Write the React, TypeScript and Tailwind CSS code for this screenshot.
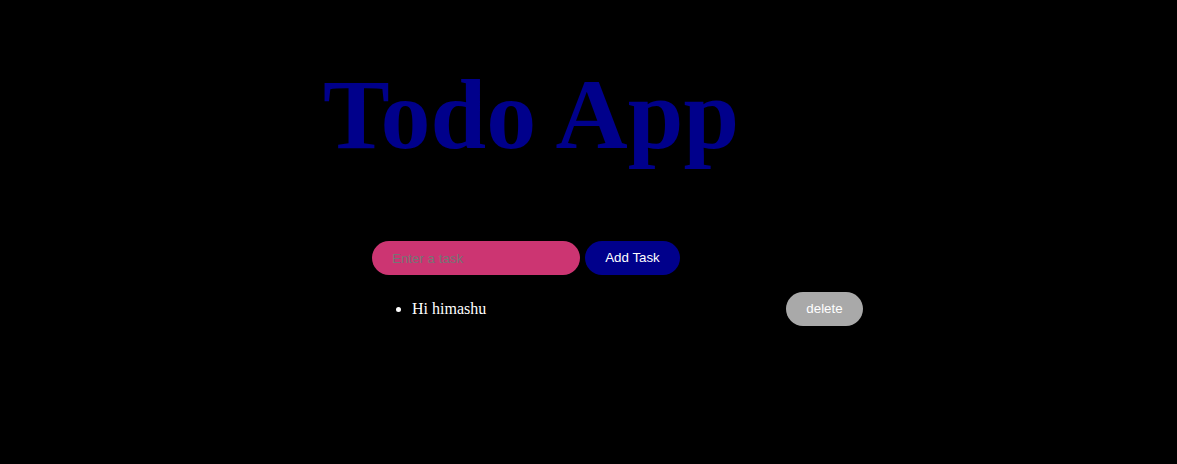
export default function App() {
  return (
    <div className="min-h-screen bg-black pt-[62px]">
      {/* Heading */}
      <h1 className="pl-[323px] font-['Liberation_Serif',serif] text-[100px] font-bold leading-[106px] text-[#00008b]">
        Todo App
      </h1>

      {/* Form */}
      <div className="mt-[73px] ml-[372px] flex gap-[5px] font-['Liberation_Sans',Arial,sans-serif] text-[13.33px]">
        <input
          type="text"
          placeholder="Enter a task"
          className="h-[34px] w-[208px] rounded-full bg-[#cc3572] px-5 text-white outline-none placeholder:text-[#757575]"
        />
        <button className="h-[34px] w-[95px] rounded-full bg-[#00008b] text-white">
          Add Task
        </button>
      </div>

      {/* List */}
      <ul className="ml-[372px] mt-[17px] w-[491px] list-disc pl-10 text-white">
        <li className="font-['Liberation_Serif',serif] text-base">
          <div className="flex items-center justify-between">
            <span>Hi himashu</span>
            <button className="h-[34px] w-[77px] rounded-full bg-[#a9a9a9] font-['Liberation_Sans',Arial,sans-serif] text-[13.33px] text-white">
              delete
            </button>
          </div>
        </li>
      </ul>
    </div>
  );
}
